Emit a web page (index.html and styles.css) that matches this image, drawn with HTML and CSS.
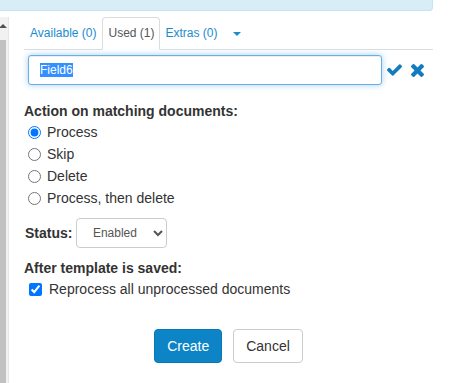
FILE: index.html
```html
<!DOCTYPE html>
<html lang="en">
<head>
  <meta charset="UTF-8" />
  <title>Template - Fields</title>
  <meta name="viewport" content="width=device-width, initial-scale=1.0" />
  <link rel="stylesheet" href="styles.css">
</head>
<body>
  <div class="info-bar"></div>

  <div class="layout">
    <!-- left panel scrollbar -->
    <div class="scrollbar">
      <div class="scroll-arrow"></div>
      <div class="scroll-thumb"></div>
    </div>

    <div class="panel">
      <ul class="tabs">
        <li><a href="#">Available (0)</a></li>
        <li class="active"><a href="#">Used (1)</a></li>
        <li><a href="#">Extras (0)</a></li>
        <li class="caret-tab"><a href="#"><span class="caret"></span></a></li>
      </ul>

      <div class="field-row">
        <input type="text" class="field-input" id="fieldName" value="Field6" />
        <svg class="icon-check" viewBox="121 334 1550 1188" width="15" height="12">
          <path d="M1671 566q0 40-28 68l-724 724-136 136q-28 28-68 28t-68-28l-136-136-362-362q-28-28-28-68t28-68l136-136q28-28 68-28t68 28l294 295 656-657q28-28 68-28t68 28l136 136q28 28 28 68z"/>
        </svg>
        <svg class="icon-times" viewBox="110 366 1188 1188" width="13" height="13">
          <path d="M1298 1322q0 40-28 68l-136 136q-28 28-68 28t-68-28l-294-294-294 294q-28 28-68 28t-68-28l-136-136q-28-28-28-68t28-68l294-294-294-294q-28-28-28-68t28-68l136-136q28-28 68-28t68 28l294 294 294-294q28-28 68-28t68 28l136 136q28 28 28 68t-28 68l-294 294 294 294q28 28 28 68z"/>
        </svg>
      </div>

      <div class="section-title action-title">Action on matching documents:</div>
      <label class="option"><input type="radio" name="action" checked /> Process</label>
      <label class="option"><input type="radio" name="action" /> Skip</label>
      <label class="option"><input type="radio" name="action" /> Delete</label>
      <label class="option"><input type="radio" name="action" /> Process, then delete</label>

      <div class="status-row">
        <span class="section-title">Status:</span>
        <select class="status-select">
          <option>Enabled</option>
          <option>Disabled</option>
        </select>
      </div>

      <div class="section-title after-title">After template is saved:</div>
      <label class="option check"><input type="checkbox" checked /> Reprocess all unprocessed documents</label>

      <div class="actions">
        <button class="btn btn-primary">Create</button>
        <button class="btn">Cancel</button>
      </div>
    </div>
  </div>

  <script>
    document.getElementById('fieldName').select();
  </script>
</body>
</html>
```

FILE: styles.css
```css
body {
  margin: 0;
  font-family: "Liberation Sans", Arial, sans-serif;
  font-size: 14px;
  color: #333;
  background: #fff;
}

.info-bar {
  width: 432px;
  height: 10px;
  background: #d9edf7;
  border-bottom: 1px solid #c3e3f0;
  border-right: 1px solid #c3e3f0;
  border-bottom-right-radius: 4px;
}

.layout {
  display: flex;
  margin-top: 6px;
}

.scrollbar {
  width: 8px;
  height: 366px;
  background: #f1f1f1;
  border-right: 1px solid #e6e6e6;
  display: flex;
  flex-direction: column;
}
.scroll-arrow {
  height: 23px;
  position: relative;
}
.scroll-arrow::after {
  content: "";
  position: absolute;
  left: -1px;
  top: 7px;
  border-left: 4px solid transparent;
  border-right: 4px solid transparent;
  border-bottom: 4px solid #505050;
}
.scroll-thumb {
  flex: 1;
  width: 6px;
  background: #c1c1c1;
}

.panel {
  width: 409px;
  margin-left: 15px;
}

.tabs {
  list-style: none;
  margin: 0;
  padding: 0;
  display: flex;
  border-bottom: 1px solid #ddd;
}
.tabs li {
  margin-bottom: -1px;
}
.tabs a {
  display: block;
  padding: 0 5px 1px;
  line-height: 30px;
  font-size: 12px;
  color: #1b8bd0;
  text-decoration: none;
  border: 1px solid transparent;
  border-radius: 4px 4px 0 0;
}
.tabs .active a {
  color: #555;
  background: #fff;
  border-color: #ddd #ddd transparent;
  padding: 0 4px 1px 5px;
}
.tabs .caret-tab a {
  padding: 0 7px 0 8px;
}
.caret {
  display: inline-block;
  vertical-align: middle;
  border-top: 4px solid #1b8bd0;
  border-left: 4px solid transparent;
  border-right: 4px solid transparent;
}

.field-row {
  display: flex;
  align-items: center;
  margin-top: 5px;
  padding-left: 4px;
}
.field-input {
  width: 354px;
  height: 30px;
  box-sizing: border-box;
  padding: 0 11px;
  font-family: "Liberation Sans", Arial, sans-serif;
  font-size: 12px;
  color: #333;
  border: 1px solid #66afe9;
  border-radius: 3px;
  outline: none;
  box-shadow: inset 0 1px 1px rgba(0,0,0,0.075), 0 0 6px rgba(102,175,233,0.6);
}
.field-input::selection {
  background: #3390ff;
  color: #fff;
}
.icon-check, .icon-times {
  fill: #137bbf;
}
.icon-check {
  margin-left: 5px;
}
.icon-times {
  margin-left: 9px;
}

.section-title {
  font-weight: bold;
  line-height: 20px;
}
.action-title {
  margin-top: 16px;
}

.option {
  display: flex;
  align-items: center;
  height: 22px;
}
.option input {
  margin: 0 6px 0 4px;
  width: 13px;
  height: 13px;
}
.option.check input {
  margin: 0 7px 0 5px;
}

.status-row {
  display: flex;
  align-items: center;
  margin-top: 9px;
  padding-left: 1px;
}
.status-select {
  margin-left: 4px;
  width: 91px;
  height: 30px;
  padding: 0 6px 0 4px;
  font-family: "Liberation Sans", Arial, sans-serif;
  font-size: 12px;
  color: #555;
  background: #fff;
  border: 1px solid #ccc;
  border-radius: 4px;
  text-align: center;
}

.after-title {
  margin-top: 10px;
}

.actions {
  display: flex;
  justify-content: center;
  gap: 11px;
  margin-top: 29px;
}
.btn {
  font-family: "Liberation Sans", Arial, sans-serif;
  font-size: 14px;
  padding: 0 12px;
  height: 34px;
  color: #333;
  background: #fff;
  border: 1px solid #ccc;
  border-radius: 4px;
  cursor: pointer;
}
.btn-primary {
  color: #fff;
  background: #0c84c6;
  border-color: #0a78b4;
}
```
